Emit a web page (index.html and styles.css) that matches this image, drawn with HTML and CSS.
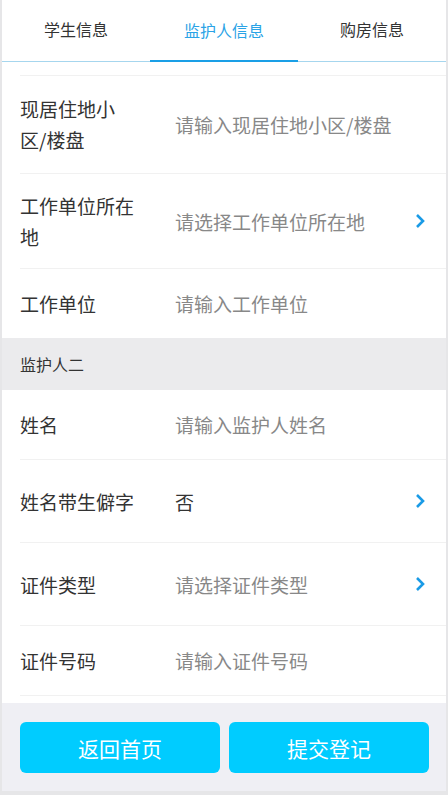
FILE: index.html
```html
<!DOCTYPE html>
<html lang="zh-CN">
<head>
  <meta charset="UTF-8" />
  <meta name="viewport" content="width=device-width, initial-scale=1.0"/>
  <title>监护人信息</title>
  <link rel="stylesheet" href="styles.css">
</head>
<body>

  <div class="app">
    <div class="tabs">
      <div class="tab">学生信息</div>
      <div class="tab active">监护人信息</div>
      <div class="tab">购房信息</div>
    </div>

    <div class="content">
      <div class="form">
        <div class="group">
          <div class="row first">
            <span class="label">现居住地小区/楼盘</span>
            <span class="value">请输入现居住地小区/楼盘</span>
          </div>
          <div class="row select">
            <span class="label">工作单位所在地</span>
            <span class="value">请选择工作单位所在地</span>
            <svg class="arrow" viewBox="0 0 10 16" width="10" height="16"><polyline points="2,2 8,8 2,14" /></svg>
          </div>
          <div class="row last">
            <span class="label">工作单位</span>
            <span class="value">请输入工作单位</span>
          </div>
        </div>

        <div class="section">监护人二</div>

        <div class="group">
          <div class="row">
            <span class="label">姓名</span>
            <span class="value">请输入监护人姓名</span>
          </div>
          <div class="row select">
            <span class="label">姓名带生僻字</span>
            <span class="value filled">否</span>
            <svg class="arrow" viewBox="0 0 10 16" width="10" height="16"><polyline points="2,2 8,8 2,14" /></svg>
          </div>
          <div class="row select">
            <span class="label">证件类型</span>
            <span class="value">请选择证件类型</span>
            <svg class="arrow" viewBox="0 0 10 16" width="10" height="16"><polyline points="2,2 8,8 2,14" /></svg>
          </div>
          <div class="row">
            <span class="label">证件号码</span>
            <span class="value">请输入证件号码</span>
          </div>
        </div>
      </div>
    </div>

    <div class="footer">
      <button class="btn">返回首页</button>
      <button class="btn">提交登记</button>
    </div>
  </div>

</body>
</html>
```

FILE: styles.css
```css
* {
  box-sizing: border-box;
}

body {
  margin: 0;
  background: #e6e6e8;
  font-family: "Noto Sans CJK SC", "Noto Sans", sans-serif;
  color: #333;
}

.app {
  width: 444px;
  height: 791px;
  margin-left: 2px;
  background: #fff;
  display: flex;
  flex-direction: column;
}

/* tabs */
.tabs {
  height: 62px;
  display: flex;
  border-bottom: 1px solid #a6d6ee;
  flex-shrink: 0;
}

.tab {
  flex: 1;
  display: flex;
  align-items: center;
  justify-content: center;
  font-size: 16px;
  color: #333;
  padding-bottom: 3px;
}

.tab.active {
  color: #2aa3e6;
  border-bottom: 2px solid #1a9fe6;
  padding-bottom: 1px;
  margin-bottom: -1px;
}

/* form */
.content {
  flex: 1;
  overflow: hidden;
}

.form {
  padding-top: 13px;
}

.row {
  display: flex;
  align-items: center;
  margin-left: 18px;
  padding: 18px 21px 18px 0;
  min-height: 70px;
  border-bottom: 1px solid #f1f1f1;
  font-size: 19px;
  line-height: 31px;
}

.row.first {
  border-top: 1px solid #f1f1f1;
  padding-top: 17px;
}

.row.select {
  padding-top: 16px;
  padding-bottom: 16px;
  min-height: 83px;
}

.row.last {
  border-bottom: none;
  min-height: 69px;
}

.label {
  width: 118px;
  margin-right: 37px;
  flex-shrink: 0;
  color: #333;
}

.value {
  flex: 1;
  color: #888;
}

.value.filled {
  color: #333;
}

.arrow {
  flex-shrink: 0;
}

.arrow polyline {
  fill: none;
  stroke: #1a9be6;
  stroke-width: 2.6;
}

.section {
  height: 52px;
  background: #ebebed;
  padding-left: 18px;
  display: flex;
  align-items: center;
  font-size: 16px;
  color: #333;
}

/* footer */
.footer {
  flex-shrink: 0;
  height: 88px;
  background: #efeff4;
  display: flex;
  gap: 9px;
  padding: 19px 17px 18px 18px;
}

.btn {
  flex: 1;
  height: 51px;
  border: none;
  border-radius: 6px;
  background: #00ccff;
  color: #fff;
  font-family: "Noto Sans CJK SC", "Noto Sans", sans-serif;
  font-size: 21px;
  cursor: pointer;
}
```
